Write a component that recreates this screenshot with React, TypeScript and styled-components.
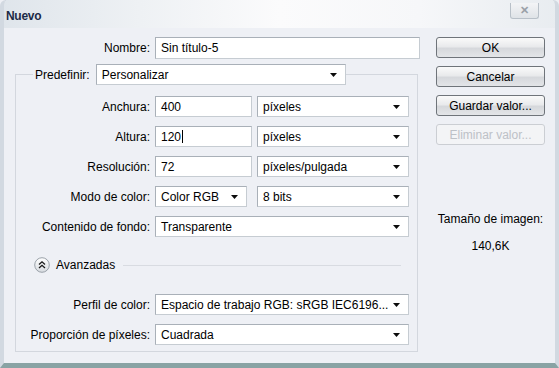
import styled, { createGlobalStyle } from "styled-components";

const GlobalStyle = createGlobalStyle`
  html, body {
    margin: 0;
    padding: 0;
    background: #eef0f5;
  }
  body {
    font-family: "Liberation Sans", Arial, sans-serif;
    font-size: 12px;
    color: #000;
  }
`;

const Window = styled.div`
  width: 559px;
  height: 368px;
  box-sizing: border-box;
  display: flex;
  flex-direction: column;
  background: #eef0f5;
  border-left: 4px solid #d2d9e1;
  border-right: 4px solid #d2d9e1;
  border-bottom: 5px solid #89a3a4;
  border-radius: 6px 6px 0 0;
  box-shadow: inset 0 1px 0 #8c98a4;
  overflow: hidden;
`;

const TitleBar = styled.div`
  height: 28px;
  flex-shrink: 0;
  display: flex;
  justify-content: space-between;
  align-items: flex-start;
  padding: 3px 20px 0 3px;
  box-sizing: border-box;
  margin: 0 -4px;
  background: linear-gradient(
    to right,
    #dfe5eb 0%,
    #eef1f4 25%,
    #fbfbfc 50%,
    #f6f7f9 75%,
    #e8ecf0 100%
  );
`;

const Title = styled.span`
  font-weight: bold;
  font-size: 12px;
  color: #1c2b47;
  align-self: center;
  padding-left: 3px;
  letter-spacing: -0.3px;
`;

const CloseButton = styled.div`
  width: 27px;
  height: 15px;
  border: 1px solid #b8c0c8;
  border-top: none;
  border-radius: 0 0 3px 3px;
  background: linear-gradient(#f3f4f6, #dfe3e7);
  display: flex;
  align-items: center;
  justify-content: center;
  color: #9aa1a8;
  font-size: 11px;
  font-weight: bold;
`;

const Body = styled.div`
  flex: 1;
  display: flex;
  padding-top: 9px;
`;

const Main = styled.div`
  width: 416px;
  display: flex;
  flex-direction: column;
`;

const Side = styled.div`
  margin-left: 16px;
  width: 109px;
  display: flex;
  flex-direction: column;
  gap: 8px;
`;

const Row = styled.div<{ $labelWidth?: number }>`
  display: grid;
  grid-template-columns: ${({ $labelWidth }) => $labelWidth ?? 134}px auto auto;
  column-gap: 5px;
  align-items: center;
  justify-content: start;
  height: 21px;
`;

const Label = styled.label`
  text-align: right;
  white-space: nowrap;
`;

const Field = styled.div<{ $width: number; $height?: number }>`
  width: ${({ $width }) => $width}px;
  height: ${({ $height }) => $height ?? 21}px;
  box-sizing: border-box;
  background: #fff;
  border: 1px solid #a9b0b8;
  border-right-color: #c6ccd2;
  border-bottom-color: #c6ccd2;
  display: flex;
  align-items: center;
  padding: 0 5px;
  white-space: nowrap;
  overflow: hidden;
`;

const Caret = styled.span`
  display: inline-block;
  width: 1px;
  height: 13px;
  background: #000;
  margin-left: 1px;
`;

const SelectBox = styled(Field)`
  justify-content: space-between;
  padding-right: 8px;
`;

const Unit = styled.div<{ $gap?: number }>`
  margin-left: ${({ $gap }) => $gap ?? 0}px;
`;

const Group = styled.fieldset`
  margin: 6px 0 0 11px;
  width: 403px;
  box-sizing: border-box;
  border: 1px solid #d3d7de;
  padding: 11px 0 6px 0;
  display: flex;
  flex-direction: column;
  gap: 9px;
`;

const Legend = styled.legend`
  display: flex;
  align-items: center;
  gap: 6px;
  padding: 0 0 0 2px;
  margin-left: 17px;
`;

const AdvancedRow = styled.div`
  display: flex;
  align-items: center;
  gap: 6px;
  margin: 11px 0 12px 18px;
  height: 16px;
`;

const Divider = styled.div`
  flex: 1;
  height: 1px;
  background: #d8dbe1;
  margin: 1px 16px 0 2px;
`;

const Button = styled.div<{ $disabled?: boolean }>`
  height: 21px;
  box-sizing: border-box;
  border: 1px solid ${({ $disabled }) => ($disabled ? "#cbced3" : "#6f747a")};
  border-radius: 3px;
  background: ${({ $disabled }) =>
    $disabled
      ? "#f3f4f6"
      : "linear-gradient(#fafafa 0%, #e9eaec 45%, #d6d8dc 55%, #e3e5e8 100%)"};
  color: ${({ $disabled }) => ($disabled ? "#bdc1c7" : "#000")};
  display: flex;
  align-items: center;
  justify-content: center;
`;

const SizeInfo = styled.div`
  margin-top: 59px;
  display: flex;
  flex-direction: column;
  align-items: center;
  gap: 13px;
`;

const Arrow = () => (
  <svg width="7" height="4" viewBox="0 0 7 4">
    <polygon points="0,0 7,0 3.5,4" fill="#0b0b0b" />
  </svg>
);

const ExpandIcon = () => (
  <svg width="16" height="16" viewBox="0 0 16 16">
    <defs>
      <linearGradient id="ei" x1="0" y1="0" x2="0" y2="1">
        <stop offset="0" stopColor="#ffffff" />
        <stop offset="1" stopColor="#d7dbe0" />
      </linearGradient>
    </defs>
    <circle cx="8" cy="8" r="7.3" fill="url(#ei)" stroke="#9aa1a9" />
    <polyline points="5,7.5 8,4.8 11,7.5" fill="none" stroke="#1a1a1a" strokeWidth="1.3" />
    <polyline points="5,11 8,8.3 11,11" fill="none" stroke="#1a1a1a" strokeWidth="1.3" />
  </svg>
);

const Select = ({ width, value }: { width: number; value: string }) => (
  <SelectBox $width={width}>
    <span>{value}</span>
    <Arrow />
  </SelectBox>
);

export default function App() {
  return (
    <>
      <GlobalStyle />
      <Window>
        <TitleBar>
          <Title>Nuevo</Title>
          <CloseButton>✕</CloseButton>
        </TitleBar>
        <Body>
          <Main>
            <Row $labelWidth={146}>
              <Label>Nombre:</Label>
              <Field $width={265} $height={22}>Sin título-5</Field>
            </Row>
            <Group>
              <Legend>
                <Label>Predefinir:</Label>
                <Select width={250} value="Personalizar" />
              </Legend>
              <Row>
                <Label>Anchura:</Label>
                <Field $width={97}>400</Field>
                <Select width={152} value="píxeles" />
              </Row>
              <Row>
                <Label>Altura:</Label>
                <Field $width={97}>
                  120
                  <Caret />
                </Field>
                <Select width={152} value="píxeles" />
              </Row>
              <Row>
                <Label>Resolución:</Label>
                <Field $width={97}>72</Field>
                <Select width={152} value="píxeles/pulgada" />
              </Row>
              <Row>
                <Label>Modo de color:</Label>
                <Select width={92} value="Color RGB" />
                <Unit $gap={5}>
                  <Select width={152} value="8 bits" />
                </Unit>
              </Row>
              <Row>
                <Label>Contenido de fondo:</Label>
                <Select width={254} value="Transparente" />
              </Row>
              <AdvancedRow>
                <ExpandIcon />
                <span>Avanzadas</span>
                <Divider />
              </AdvancedRow>
              <Row>
                <Label>Perfil de color:</Label>
                <Select width={254} value="Espacio de trabajo RGB: sRGB IEC6196..." />
              </Row>
              <Row>
                <Label>Proporción de píxeles:</Label>
                <Select width={254} value="Cuadrada" />
              </Row>
            </Group>
          </Main>
          <Side>
            <Button>OK</Button>
            <Button>Cancelar</Button>
            <Button>Guardar valor...</Button>
            <Button $disabled>Eliminar valor...</Button>
            <SizeInfo>
              <span>Tamaño de imagen:</span>
              <span>140,6K</span>
            </SizeInfo>
          </Side>
        </Body>
      </Window>
    </>
  );
}
